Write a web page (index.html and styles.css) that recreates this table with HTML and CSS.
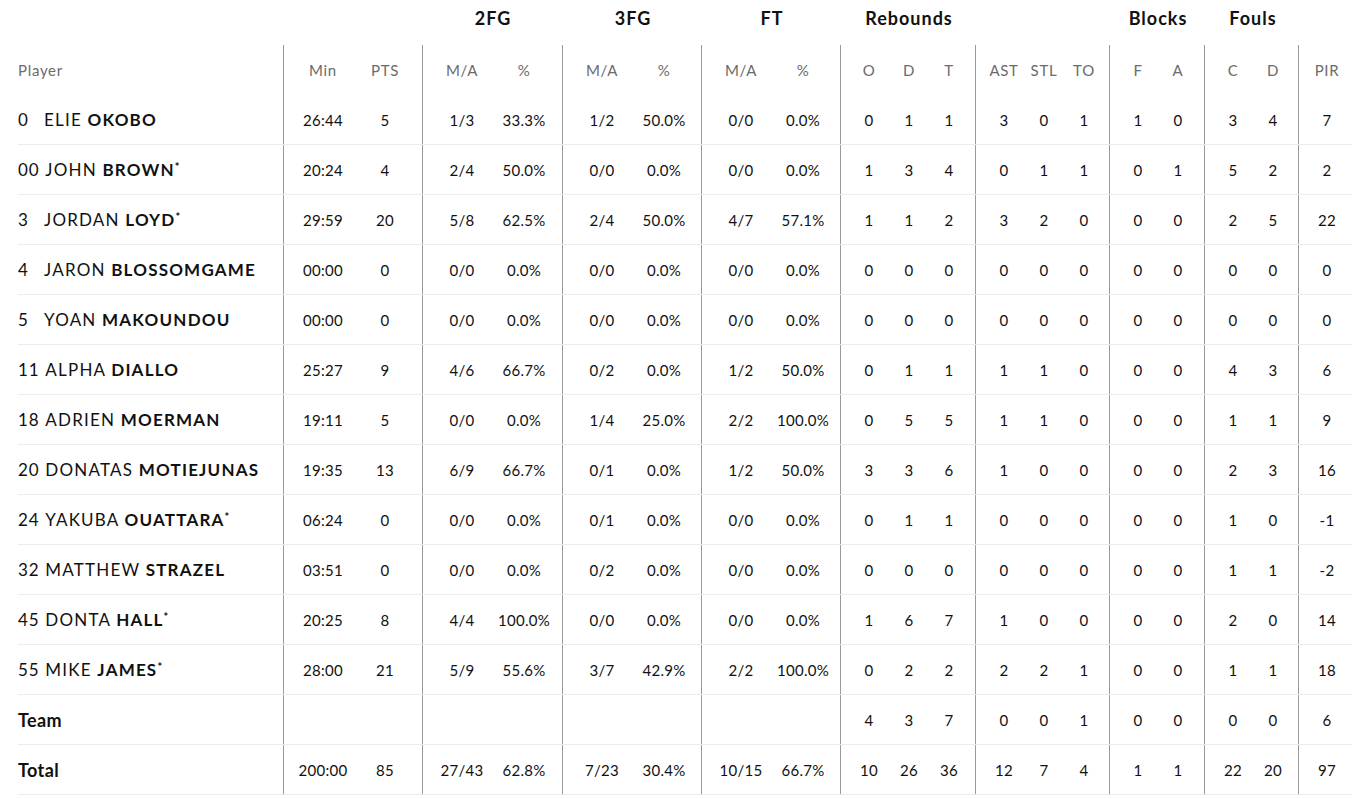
FILE: index.html
```html
<!DOCTYPE html>
<html lang="en">
<head>
<meta charset="utf-8">
<title>Box score</title>
<link rel="stylesheet" href="styles.css">
</head>
<body>
<div class="box">
  <div class="row titles">
    <div class="player"></div>
    <div class="grp w2"></div>
    <div class="grp w2 g2"><span class="title">2FG</span></div>
    <div class="grp w2"><span class="title">3FG</span></div>
    <div class="grp w2"><span class="title">FT</span></div>
    <div class="grp w3"><span class="title">Rebounds</span></div>
    <div class="grp w3 g5"></div>
    <div class="grp s2"><span class="title">Blocks</span></div>
    <div class="grp s2 g8"><span class="title">Fouls</span></div>
    <div class="grp s1"></div>
  </div>
  <div class="row head">
    <div class="player">Player</div>
    <div class="grp"><span class="c">Min</span><span class="c">PTS</span></div>
    <div class="grp g2"><span class="c">M/A</span><span class="c">%</span></div>
    <div class="grp"><span class="c">M/A</span><span class="c">%</span></div>
    <div class="grp"><span class="c">M/A</span><span class="c">%</span></div>
    <div class="grp"><span class="c s">O</span><span class="c s">D</span><span class="c s">T</span></div>
    <div class="grp g5"><span class="c s">AST</span><span class="c s">STL</span><span class="c s">TO</span></div>
    <div class="grp"><span class="c s">F</span><span class="c s">A</span></div>
    <div class="grp g8"><span class="c s">C</span><span class="c s">D</span></div>
    <div class="grp"><span class="c s">PIR</span></div>
  </div>
  <div id="body"></div>
</div>
<script src="app.js"></script>
</body>
</html>
```
FILE: app.js
```js
const rows = [
  ["0","ELIE","OKOBO",0,"26:44","5","1/3","33.3%","1/2","50.0%","0/0","0.0%","0","1","1","3","0","1","1","0","3","4","7"],
  ["00","JOHN","BROWN",1,"20:24","4","2/4","50.0%","0/0","0.0%","0/0","0.0%","1","3","4","0","1","1","0","1","5","2","2"],
  ["3","JORDAN","LOYD",1,"29:59","20","5/8","62.5%","2/4","50.0%","4/7","57.1%","1","1","2","3","2","0","0","0","2","5","22"],
  ["4","JARON","BLOSSOMGAME",0,"00:00","0","0/0","0.0%","0/0","0.0%","0/0","0.0%","0","0","0","0","0","0","0","0","0","0","0"],
  ["5","YOAN","MAKOUNDOU",0,"00:00","0","0/0","0.0%","0/0","0.0%","0/0","0.0%","0","0","0","0","0","0","0","0","0","0","0"],
  ["11","ALPHA","DIALLO",0,"25:27","9","4/6","66.7%","0/2","0.0%","1/2","50.0%","0","1","1","1","1","0","0","0","4","3","6"],
  ["18","ADRIEN","MOERMAN",0,"19:11","5","0/0","0.0%","1/4","25.0%","2/2","100.0%","0","5","5","1","1","0","0","0","1","1","9"],
  ["20","DONATAS","MOTIEJUNAS",0,"19:35","13","6/9","66.7%","0/1","0.0%","1/2","50.0%","3","3","6","1","0","0","0","0","2","3","16"],
  ["24","YAKUBA","OUATTARA",1,"06:24","0","0/0","0.0%","0/1","0.0%","0/0","0.0%","0","1","1","0","0","0","0","0","1","0","-1"],
  ["32","MATTHEW","STRAZEL",0,"03:51","0","0/0","0.0%","0/2","0.0%","0/0","0.0%","0","0","0","0","0","0","0","0","1","1","-2"],
  ["45","DONTA","HALL",1,"20:25","8","4/4","100.0%","0/0","0.0%","0/0","0.0%","1","6","7","1","0","0","0","0","2","0","14"],
  ["55","MIKE","JAMES",1,"28:00","21","5/9","55.6%","3/7","42.9%","2/2","100.0%","0","2","2","2","2","1","0","0","1","1","18"],
  ["Team",null,null,0,"","","","","","","","","4","3","7","0","0","1","0","0","0","0","6"],
  ["Total",null,null,0,"200:00","85","27/43","62.8%","7/23","30.4%","10/15","66.7%","10","26","36","12","7","4","1","1","22","20","97"]
];
const groups = [[2,false,""],[2,false," g2"],[2,false,""],[2,false,""],[3,true,""],[3,true," g5"],[2,true,""],[2,true," g8"],[1,true,""]];
const body = document.getElementById("body");
for (const r of rows) {
  const row = document.createElement("div");
  row.className = "row data";
  const p = document.createElement("div");
  p.className = "player";
  if (r[1] === null) {
    p.innerHTML = '<b class="label">' + r[0] + '</b>';
  } else {
    p.innerHTML = '<span class="num">' + r[0] + '</span><span class="first">' + r[1] + '&nbsp;</span><b class="last">' + r[2] + '</b>' + (r[3] ? '<sup class="star">*</sup>' : '');
  }
  row.appendChild(p);
  let i = 4;
  for (const [n, small, extra] of groups) {
    const g = document.createElement("div");
    g.className = "grp" + extra;
    for (let k = 0; k < n; k++) {
      const c = document.createElement("span");
      c.className = "c" + (small ? " s" : "");
      c.textContent = r[i++];
      g.appendChild(c);
    }
    row.appendChild(g);
  }
  body.appendChild(row);
}
```
FILE: styles.css
```css
html, body {
  margin: 0;
  padding: 0;
  background: #ffffff;
}
body {
  font-family: "Lato", "Liberation Sans", sans-serif;
  color: #111111;
}
.box {
  padding-left: 18px;
}
.row {
  display: flex;
  align-items: stretch;
}
.player {
  width: 265px;
  flex: none;
  display: flex;
  align-items: center;
  white-space: nowrap;
}
.grp {
  flex: none;
  display: flex;
  align-items: center;
  border-left: 1px solid #9a9a9a;
  padding: 0 6px 0 8px;
}
.grp.g2 { padding-right: 7px; }
.grp.g5 { padding-right: 5px; }
.grp.g8 { padding-right: 5px; }
.c {
  width: 62px;
  text-align: center;
  flex: none;
  letter-spacing: 0.3px;
}
.c.s {
  width: 40px;
}
.titles {
  height: 45px;
}
.titles .grp {
  border-left-color: transparent;
  justify-content: center;
  padding-bottom: 9px;
}
.titles .w2 { width: 124px; }
.titles .w3 { width: 120px; }
.titles .s2 { width: 80px; }
.titles .s1 { width: 40px; }
.title {
  font-size: 18px;
  font-weight: 700;
  letter-spacing: 1px;
  color: #111111;
}
.head {
  height: 50px;
  font-size: 15px;
  color: #6b6b6b;
}
.head .c,
.head .player {
  letter-spacing: 0.7px;
}
.data {
  height: 50px;
  box-sizing: border-box;
  border-bottom: 1px solid #ececec;
  font-size: 15px;
}
.data .grp {
  padding-top: 1px;
}
.num {
  min-width: 20px;
  margin-right: 6px;
  font-size: 17px;
  letter-spacing: 0.8px;
}
.first {
  font-size: 17px;
  font-weight: 400;
  letter-spacing: 1.2px;
}
.last {
  font-size: 17px;
  font-weight: 700;
  letter-spacing: 1.2px;
}
.star {
  font-size: 11px;
  font-weight: 700;
  align-self: flex-start;
  margin-top: 15px;
  margin-left: 0;
}
.label {
  font-size: 18px;
  font-weight: 700;
  letter-spacing: 0.4px;
}
```
